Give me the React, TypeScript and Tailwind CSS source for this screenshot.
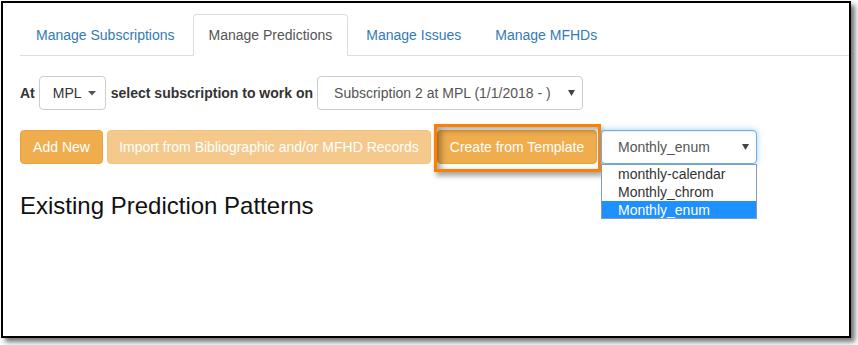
import React from "react";

function Caret() {
  return (
    <svg width="8" height="5" viewBox="0 0 8 5" className="ml-[6px]">
      <polygon points="0,0 8,0 4,4.5" fill="#555" />
    </svg>
  );
}

function SelArrow() {
  return (
    <svg width="7" height="6" viewBox="0 0 7 6">
      <polygon points="0,0 7,0 3.5,6" fill="#444" />
    </svg>
  );
}

export default function App() {
  const tabs = ["Manage Subscriptions", "Manage Predictions", "Manage Issues", "Manage MFHDs"];
  return (
    <div className="w-[858px] h-[345px] bg-white font-['Liberation_Sans',Arial,sans-serif] text-[14px] leading-[20px] pt-[1px] pl-[1px]">
      <div className="w-[850px] h-[337px] border-2 border-black bg-white shadow-[4px_4px_5px_rgba(0,0,0,0.55)] pt-[11px] pl-[17px]">
        <div className="flex border-b border-[#ddd]">
          {tabs.map((t, i) => (
            <div
              key={t}
              className={
                i === 1
                  ? "px-[15px] py-[10px] mr-[2px] -mb-[1px] border border-[#ddd] border-b-white rounded-t-[4px] bg-white text-[#555]"
                  : "px-[15px] py-[10px] mr-[2px] -mb-[1px] border border-transparent rounded-t-[4px] text-[#337ab7]"
              }
            >
              {t}
            </div>
          ))}
        </div>

        <div className="mt-[20px] flex items-center text-[#333]">
          <span className="font-bold">At</span>
          <div className="ml-[4px] h-[34px] w-[67px] border border-[#ccc] rounded-[4px] bg-white flex items-center pl-[13px] text-[#333]">
            MPL
            <Caret />
          </div>
          <span className="ml-[5px] font-bold">select subscription to work on</span>
          <div className="ml-[4px] h-[34px] w-[266px] border border-[#ccc] rounded-[4px] bg-white flex items-center justify-between pl-[16px] pr-[7px] text-[#555]">
            <span>Subscription 2 at MPL (1/1/2018 - )</span>
            <SelArrow />
          </div>
        </div>

        <div className="mt-[20px] flex items-center">
          <div className="h-[34px] w-[83px] flex items-center justify-center rounded-[4px] bg-[#f0ad4e] border border-[#eea236] text-white">
            Add New
          </div>
          <div className="ml-[4px] h-[34px] w-[324px] flex items-center justify-center rounded-[4px] bg-[#f0ad4e] border border-[#eea236] text-white opacity-65">
            Import from Bibliographic and/or MFHD Records
          </div>
          <div className="ml-[6px] relative">
            <div className="h-[34px] w-[160px] flex items-center justify-center rounded-[4px] bg-[#f0ad4e] border border-[#eea236] text-white">
              Create from Template
            </div>
            <div className="absolute left-[-3px] right-[-4px] top-[-6px] bottom-[-8px] border-[3px] border-[#ff8000] shadow-[2px_4px_5px_rgba(0,0,0,0.35),inset_4px_3px_6px_rgba(0,0,0,0.35)]" />
          </div>
          <div className="ml-[4px] relative">
            <div className="h-[34px] w-[156px] border border-[#66afe9] rounded-[4px] bg-white flex items-center justify-between pl-[16px] pr-[7px] text-[#555] shadow-[inset_0_1px_1px_rgba(0,0,0,0.075),0_0_6px_rgba(102,175,233,0.6)]">
              <span>Monthly_enum</span>
              <SelArrow />
            </div>
            <div className="absolute left-0 top-full w-[156px] border border-[#7f9db9] bg-white text-[#333] leading-[18px]">
              <div className="pl-[16px] h-[18px]">monthly-calendar</div>
              <div className="pl-[16px] h-[18px]">Monthly_chrom</div>
              <div className="pl-[16px] h-[17px] bg-[#1e90ff] text-white">Monthly_enum</div>
            </div>
          </div>
        </div>

        <h3 className="mt-[29px] text-[24px] leading-[26px] text-[#111]">Existing Prediction Patterns</h3>
      </div>
    </div>
  );
}
